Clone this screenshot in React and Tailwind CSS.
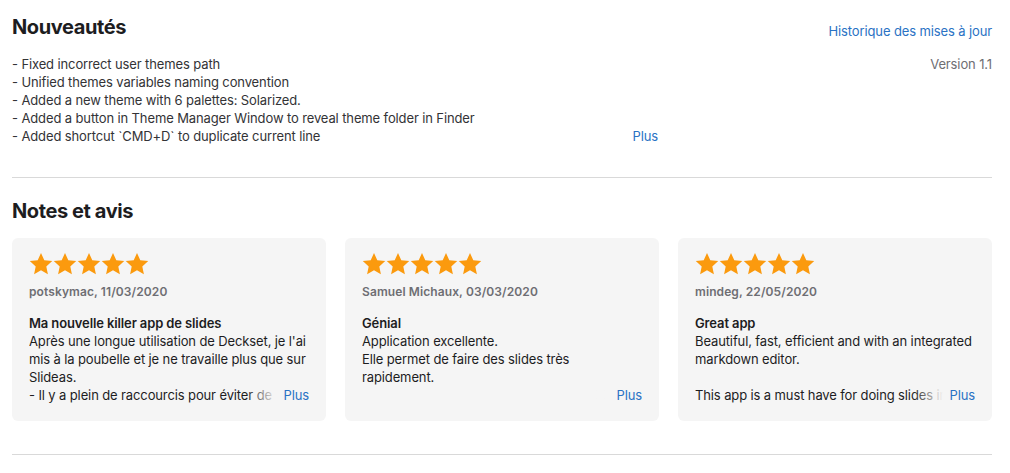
import React from 'react';

const notes = [
  '- Fixed incorrect user themes path',
  '- Unified themes variables naming convention',
  '- Added a new theme with 6 palettes: Solarized.',
  '- Added a button in Theme Manager Window to reveal theme folder in Finder',
  '- Added shortcut `CMD+D` to duplicate current line',
];

const reviews = [
  {
    author: 'potskymac, 11/03/2020',
    title: 'Ma nouvelle killer app de slides',
    body: "Après une longue utilisation de Deckset, je l'ai mis à la poubelle et je ne travaille plus que sur Slideas.\n- Il y a plein de raccourcis pour éviter de passer par la souris",
  },
  {
    author: 'Samuel Michaux, 03/03/2020',
    title: 'Génial',
    body: 'Application excellente.\nElle permet de faire des slides très rapidement.',
  },
  {
    author: 'mindeg, 22/05/2020',
    title: 'Great app',
    body: 'Beautiful, fast, efficient and with an integrated markdown editor.\n\nThis app is a must have for doing slides in markdown.',
  },
];

const Star = () => (
  <svg width="24" height="24" viewBox="0 0 24 24" className="shrink-0">
    <path
      d="M12 1l3.3 7.2 7.9.9-5.9 5.3 1.6 7.8L12 18.3l-6.9 3.9 1.6-7.8L.8 9.1l7.9-.9z"
      fill="#fb9a0e"
    />
  </svg>
);

const ReviewCard = ({ author, title, body }) => (
  <div className="flex-1 rounded-md bg-[#f5f5f5] px-[17px] pt-[14px] pb-[17px]">
    <div className="flex">
      {[0, 1, 2, 3, 4].map((i) => (
        <Star key={i} />
      ))}
    </div>
    <div className="mt-[8px] text-[12px] leading-[16px] font-semibold tracking-[0.1px] text-[#6e6e73]">{author}</div>
    <div className="mt-[14px] text-[13px] leading-[18px] font-semibold text-[#1d1d1f]">{title}</div>
    <div className="relative h-[72px] overflow-hidden">
      <p className="whitespace-pre-line text-[13px] leading-[18px] text-[#1d1d1f]">{body}</p>
      <div className="absolute right-0 bottom-0 flex h-[18px]">
        <div className="w-[30px] bg-linear-to-r from-[#f5f5f500] to-[#f5f5f5]" />
        <span className="bg-[#f5f5f5] pl-[6px] text-[13px] leading-[18px] text-[#2a72c4]">Plus</span>
      </div>
    </div>
  </div>
);

export default function App() {
  return (
    <div
      className="min-h-[473px] w-full bg-white pt-[14px] pr-[18px] pl-3 tracking-[-0.12px]"
      style={{ fontFamily: 'Inter, "Noto Sans", sans-serif' }}
    >
      <div className="flex items-end justify-between">
        <h2 className="text-[20px] leading-[26px] font-bold tracking-[-0.4px] text-[#1d1d1f]">Nouveautés</h2>
        <a className="text-[13px] leading-[18px] text-[#2a72c4]">Historique des mises à jour</a>
      </div>

      <div className="mt-[15px] flex justify-between">
        <div className="flex w-[646px] items-end justify-between">
          <ul className="text-[13px] leading-[18px] text-[#333336]">
            {notes.map((n) => (
              <li key={n}>{n}</li>
            ))}
          </ul>
          <span className="text-[13px] leading-[18px] text-[#2a72c4]">Plus</span>
        </div>
        <span className="text-[13px] leading-[18px] text-[#6e6e73]">Version 1.1</span>
      </div>

      <hr className="mt-[32px] border-t border-[#d9d9d9]" />

      <h2 className="mt-[20px] text-[20px] leading-[26px] font-bold tracking-[-0.4px] text-[#1d1d1f]">Notes et avis</h2>

      <div className="mt-[14px] flex gap-[19px]">
        {reviews.map((r) => (
          <ReviewCard key={r.author} {...r} />
        ))}
      </div>

      <hr className="mt-[33px] border-t border-[#d9d9d9]" />
    </div>
  );
}
